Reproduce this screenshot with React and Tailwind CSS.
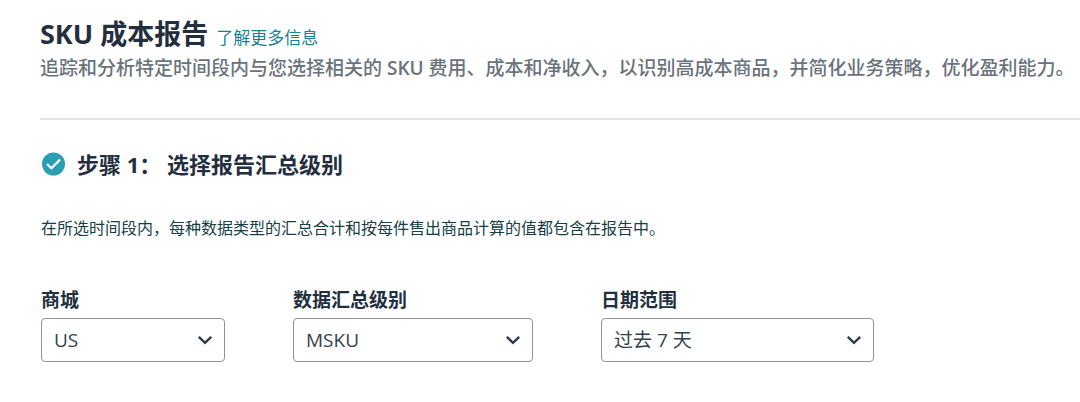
import React, { useState } from 'react';

const filters = [
  { id: 'store', label: '商城', width: 'w-[184px]', options: ['US', 'CA', 'MX'] },
  { id: 'level', label: '数据汇总级别', width: 'w-[240px]', options: ['MSKU', 'FNSKU', 'ASIN'] },
  { id: 'range', label: '日期范围', width: 'w-[273px]', options: ['过去 7 天', '过去 30 天', '过去 90 天'] },
];

function CheckIcon() {
  return (
    <svg className="h-6 w-6 shrink-0" viewBox="0 0 24 24" fill="none" aria-hidden="true">
      <circle cx="12.5" cy="12" r="11.5" fill="#2a9fb4" />
      <path d="M6 12l4.4 4.2 8.6-8.6" stroke="white" strokeWidth="2.2" />
    </svg>
  );
}

function SelectField({ id, label, width, options }) {
  const [value, setValue] = useState(options[0]);

  return (
    <div className={width}>
      <label htmlFor={id} className="block text-[19px] leading-7 font-bold text-[#232f3e]">
        {label}
      </label>
      <div className="relative mt-1">
        <select
          id={id}
          value={value}
          onChange={(e) => setValue(e.target.value)}
          className="block h-11 w-full appearance-none rounded-sm border border-[#8f9496] bg-white pr-10 pl-3 text-[19px] text-[#36414e]"
        >
          {options.map((option) => (
            <option key={option}>{option}</option>
          ))}
        </select>
        <svg
          className="pointer-events-none absolute top-3.5 right-3 h-4 w-4"
          viewBox="0 0 16 16"
          fill="none"
          stroke="#2f3b49"
          strokeWidth="2.4"
          aria-hidden="true"
        >
          <path d="M1.8 4.8L8 10.8l6.2-6" />
        </svg>
      </div>
    </div>
  );
}

function App() {
  return (
    <main className="bg-white pt-4 pb-10 pl-10 font-['Open_Sans','Noto_Sans_CJK_SC',sans-serif] text-[#232f3e]">
      <header className="border-b-2 border-[#e3e5e5] pb-[34px]">
        <div className="flex items-baseline gap-2">
          <h1 className="text-[27px] leading-9 font-bold">SKU 成本报告</h1>
          <a href="#learn-more" className="text-[17px] leading-6 text-[#1a8093]">
            了解更多信息
          </a>
        </div>
        <p className="text-[19px] leading-8 font-medium whitespace-nowrap text-[#6a737b]">
          追踪和分析特定时间段内与您选择相关的 <span className="font-semibold">SKU</span>{' '}
          费用、成本和净收入，以识别高成本商品，并简化业务策略，优化盈利能力。
        </p>
      </header>

      <section className="pt-7 pl-px">
        <div className="flex items-center gap-3">
          <CheckIcon />
          <h2 className="text-[22px] leading-8 font-bold">步骤 1： 选择报告汇总级别</h2>
        </div>
        <p className="mt-9 text-[16px] leading-6 text-[#163f46]">
          在所选时间段内，每种数据类型的汇总合计和按每件售出商品计算的值都包含在报告中。
        </p>
        <form className="mt-[46px] flex gap-17">
          {filters.map((filter) => (
            <SelectField key={filter.id} {...filter} />
          ))}
        </form>
      </section>
    </main>
  );
}

export default App;
